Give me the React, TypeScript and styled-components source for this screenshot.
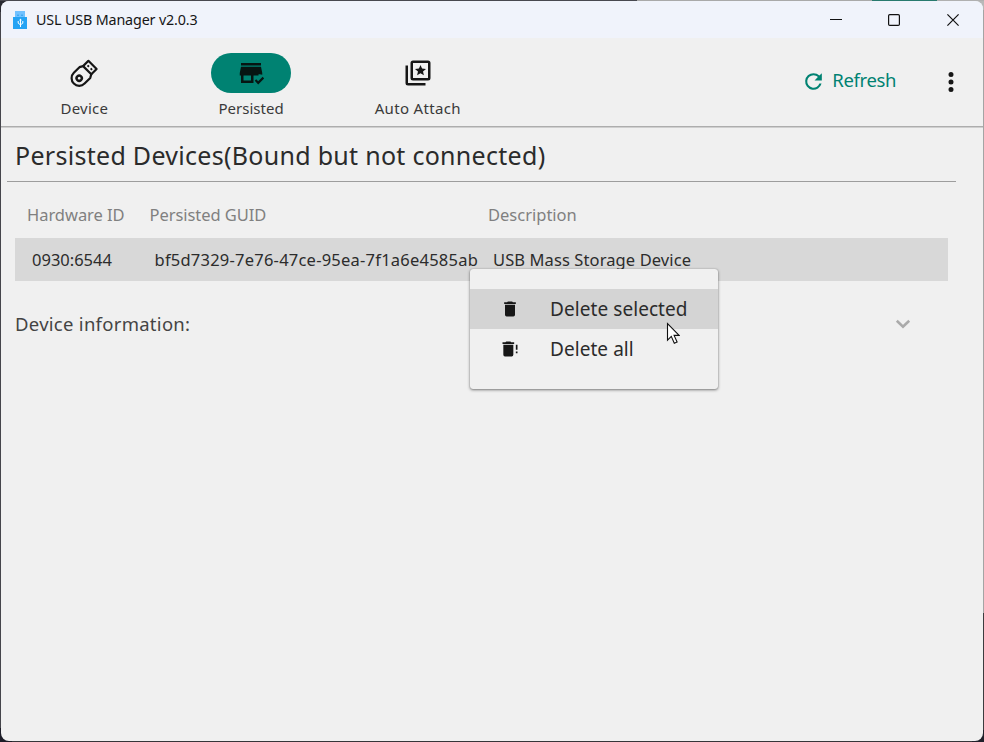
import React from 'react';
import styled, { createGlobalStyle } from 'styled-components';

const GlobalStyle = createGlobalStyle`
  * { box-sizing: border-box; }
  html, body { margin: 0; overflow: hidden; }
  body { font-family: "Noto Sans", "Open Sans", sans-serif; color: #2b2b2b; }
  svg { display: block; flex: none; }
`;

const Desktop = styled.div`
  width: 984px;
  height: 742px;
  padding: 1px;
  background:
    linear-gradient(90deg, #48484f 0 637px, #a9a9a9 637px 872px, #287a6e 872px 937px, #b0b0b0 937px) 0 0 / 100% 1px no-repeat,
    linear-gradient(#b8b8b8 0 10px, #a4a4a4 10px 613px, #3c3c3e 613px 730px, #20202a 730px) 100% 0 / 12px 100% no-repeat,
    linear-gradient(#292932 0 12px, #45454b 12px 728px, #1c1c27 728px) 0 0 / 12px 100% no-repeat,
    #353539;
`;

const Window = styled.div`
  position: relative;
  display: flex;
  flex-direction: column;
  width: 982px;
  height: 740px;
  overflow: hidden;
  border-radius: 8px;
  background: #f0f0f0;
`;

const TitleBar = styled.header`
  display: flex;
  align-items: center;
  height: 37px;
  padding: 0 1px 0 12px;
  background: #f0f3fb;
`;

const Label = styled.span<{ $size: number; $spacing?: number }>`
  font-size: ${p => p.$size}px;
  letter-spacing: ${p => p.$spacing ?? 0}px;
  line-height: 24px;
  white-space: nowrap;
`;

const WindowTitle = styled(Label)`
  flex: 1;
  margin-left: 8px;
  color: #161616;
`;

const WindowButton = styled.button`
  display: grid;
  place-items: center;
  width: 58.5px;
  height: 36px;
  padding: 0;
  border: 0;
  background: none;
`;

const Toolbar = styled.nav`
  display: flex;
  height: 89px;
  border-bottom: 1px solid #adadad;
  box-shadow: 0 1px 0 #cfcfcf;
`;

const Tab = styled.button`
  display: flex;
  flex-direction: column;
  align-items: center;
  width: 166.7px;
  padding: 15px 0 0;
  border: 0;
  background: none;
  font-family: inherit;
  color: #3a3a3a;
`;

const TabPill = styled.span<{ $active?: boolean }>`
  display: grid;
  place-items: center;
  width: 80px;
  height: 40px;
  margin-bottom: 3px;
  border-radius: 20px;
  background: ${p => (p.$active ? '#008272' : 'transparent')};
`;

const Actions = styled.div`
  display: flex;
  align-items: center;
  margin-left: auto;
  padding-right: 17px;
`;

const RefreshButton = styled.button`
  display: flex;
  align-items: center;
  gap: 6px;
  margin: 0 40px 2px 0;
  padding: 0;
  border: 0;
  background: none;
  font-family: inherit;
  color: #008272;
`;

const RefreshLabel = styled(Label)`
  margin-bottom: 2px;
`;

const Page = styled.main`
  flex: 1;
  padding: 1px 27px 0 6px;
`;

const Heading = styled.h1`
  height: 54px;
  margin: 0;
  padding-left: 8px;
  border-bottom: 1px solid #9d9d9d;
  font-size: 25px;
  font-weight: 400;
  letter-spacing: 0.29px;
  line-height: 54px;
  white-space: nowrap;
`;

const Content = styled.section`
  padding: 11px 8px 0;
`;

const TableRow = styled.div<{ $kind: 'head' | 'selected' }>`
  display: grid;
  grid-template-columns: 122.5px 338.5px 1fr;
  align-items: center;
  height: ${p => (p.$kind === 'head' ? 45 : 43)}px;
  padding-left: ${p => (p.$kind === 'head' ? 12 : 17)}px;
  padding-bottom: ${p => (p.$kind === 'head' ? 2 : 0)}px;
  background: ${p => (p.$kind === 'head' ? 'transparent' : '#d8d8d8')};
  color: ${p => (p.$kind === 'head' ? '#808080' : '#2c2c2c')};
`;

const Expander = styled.div`
  display: flex;
  align-items: center;
  justify-content: space-between;
  height: 86px;
  padding-right: 37px;
  color: #444;
`;

const ContextMenu = styled.div`
  position: absolute;
  left: 469px;
  top: 268px;
  width: 248px;
  height: 120px;
  padding: 20px 0;
  border-radius: 3px;
  background: #f0f0f0;
  box-shadow: 0 1px 3px rgba(0, 0, 0, 0.5), 0 0 1px rgba(0, 0, 0, 0.3);
`;

const MenuItem = styled.div<{ $hover?: boolean }>`
  display: flex;
  align-items: center;
  gap: 30px;
  height: 40px;
  padding-left: 30px;
  background: ${p => (p.$hover ? '#d4d4d4' : 'transparent')};
`;

const Pointer = styled.svg`
  position: absolute;
  left: 665px;
  top: 321px;
`;

const Glyph = ({ d, size, color = '#161616' }: { d: string; size: number; color?: string }) => (
  <svg width={size} height={size} viewBox="0 0 24 24" fill={color}>
    <path fillRule="evenodd" d={d} />
  </svg>
);

const icons = {
  storeCheck:
    'M4 4h16v2H4zM3 12l1-5h16l1 5v1.34a6 6 0 0 0-3-.26V14h-4v6H4v-6H3zM6 14v4h6v-4zM17.75 21.16l-2.75-3L16.16 17l1.59 1.59L21.34 15l1.16 1.41z',
  starBoxes:
    'M4 6H2v14a2 2 0 0 0 2 2h14v-2H4zM20 4v12H8V4zM20 2H8a2 2 0 0 0-2 2v12a2 2 0 0 0 2 2h12a2 2 0 0 0 2-2V4a2 2 0 0 0-2-2zM14 5.5l1.24 2.93 3.17.27-2.4 2.08.72 3.1L14 12.23l-2.73 1.65.72-3.1-2.4-2.08 3.17-.27z',
  refresh:
    'M17.65 6.35A7.96 7.96 0 0 0 12 4a8 8 0 1 0 7.73 10h-2.08A6 6 0 1 1 12 6c1.66 0 3.14.69 4.22 1.78L13 11h7V4z',
  more: 'M12 8a2 2 0 1 0 0-4 2 2 0 0 0 0 4zM12 10a2 2 0 1 0 0 4 2 2 0 0 0 0-4zM12 16a2 2 0 1 0 0 4 2 2 0 0 0 0-4z',
  trash: 'M19 4h-3.5l-1-1h-5l-1 1H5v2h14zM6 19a2 2 0 0 0 2 2h8a2 2 0 0 0 2-2V7H6z',
  trashAlert:
    'M17 4v2H3V4h3.5l1-1h5l1 1zM4 19V7h12v12a2 2 0 0 1-2 2H6a2 2 0 0 1-2-2zM19 15h2v2h-2zM19 7h2v6h-2z',
};

const AppIcon = () => (
  <svg width="15" height="20" viewBox="0 0 15 20">
    <path d="M2 1h10v7H2z" fill="#71c1ff" />
    <path d="M4 5.2h2M8 5.2h2" stroke="#319ee9" strokeWidth="1" />
    <path d="M0 7h14v12H0z" fill="#25a3f4" />
    <path d="M7.5 9.5v7.5M5.2 11v2.2l2.3 1.6 2.3-1.6V11" fill="none" stroke="#fff" strokeWidth="1" />
    <path d="M6.2 10.4 7.5 8.6l1.3 1.8z" fill="#fff" />
  </svg>
);

const UsbStick = () => (
  <svg width="30" height="30" viewBox="0 0 30 30" fill="none" stroke="#161616" strokeWidth="2.2">
    <g transform="translate(10.2 20.2) rotate(45)">
      <path d="M-7.6-8V0A7.6 7.6 0 0 0 7.6 0V-8L5.8-11.3H-5.8z" strokeLinejoin="round" />
      <path d="M-5.8-11.3V-18.8H5.8V-11.3" strokeLinejoin="round" />
      <circle r="2.6" strokeWidth="2.4" />
      <path d="M-3.2-15h2M1.2-15h2" strokeWidth="1.9" />
    </g>
  </svg>
);

export default function App() {
  return (
    <Desktop>
      <GlobalStyle />
      <Window>
        <TitleBar>
          <AppIcon />
          <WindowTitle $size={14.3} $spacing={-0.14}>USL USB Manager v2.0.3</WindowTitle>
          <WindowButton aria-label="Minimize">
            <svg width="12" height="12" viewBox="0 0 12 12"><path d="M0 5.5h12" stroke="#111" /></svg>
          </WindowButton>
          <WindowButton aria-label="Maximize">
            <svg width="12" height="12" viewBox="0 0 12 12">
              <rect x=".6" y=".6" width="10.8" height="10.8" rx="1.2" fill="none" stroke="#111" strokeWidth="1.2" />
            </svg>
          </WindowButton>
          <WindowButton aria-label="Close">
            <svg width="12" height="12" viewBox="0 0 12 12"><path d="m.4.4 11.2 11.2M11.6.4.4 11.6" stroke="#111" strokeWidth="1.2" /></svg>
          </WindowButton>
        </TitleBar>
        <Toolbar>
          <Tab>
            <TabPill><UsbStick /></TabPill>
            <Label $size={15} $spacing={0.25}>Device</Label>
          </Tab>
          <Tab>
            <TabPill $active><Glyph d={icons.storeCheck} size={30} color="#061512" /></TabPill>
            <Label $size={15} $spacing={0.02}>Persisted</Label>
          </Tab>
          <Tab>
            <TabPill><Glyph d={icons.starBoxes} size={30} /></TabPill>
            <Label $size={15} $spacing={0.33}>Auto Attach</Label>
          </Tab>
          <Actions>
            <RefreshButton>
              <Glyph d={icons.refresh} size={25} color="#008272" />
              <RefreshLabel $size={18.5} $spacing={-0.38}>Refresh</RefreshLabel>
            </RefreshButton>
            <Glyph d={icons.more} size={30} />
          </Actions>
        </Toolbar>
        <Page>
          <Heading>Persisted Devices(Bound but not connected)</Heading>
          <Content>
            <TableRow $kind="head">
              <Label $size={16.5} $spacing={-0.04}>Hardware ID</Label>
              <Label $size={16.5} $spacing={-0.06}>Persisted GUID</Label>
              <Label $size={16.5}>Description</Label>
            </TableRow>
            <TableRow $kind="selected">
              <Label $size={16.5}>0930:6544</Label>
              <Label $size={16.5} $spacing={0.23}>bf5d7329-7e76-47ce-95ea-7f1a6e4585ab</Label>
              <Label $size={16.5} $spacing={0.1}>USB Mass Storage Device</Label>
            </TableRow>
            <Expander>
              <Label $size={18.5} $spacing={0.28}>Device information:</Label>
              <svg width="16" height="10" viewBox="0 0 16 10">
                <path d="m1.8 1.8 6.2 6 6.2-6" fill="none" stroke="#aaa" strokeWidth="2.6" />
              </svg>
            </Expander>
          </Content>
        </Page>
        <ContextMenu>
          <MenuItem $hover>
            <Glyph d={icons.trash} size={20} />
            <Label $size={19} $spacing={0.07}>Delete selected</Label>
          </MenuItem>
          <MenuItem>
            <Glyph d={icons.trashAlert} size={20} />
            <Label $size={19} $spacing={0.06}>Delete all</Label>
          </MenuItem>
        </ContextMenu>
        <Pointer width="14" height="24" viewBox="0 0 14 24">
          <path d="M1.5 1.5v16.6l3.8-3.7 3 6.8 2.8-1.2-3-6.6h5z" fill="#fff" stroke="#111" strokeWidth="1.1" />
        </Pointer>
      </Window>
    </Desktop>
  );
}
